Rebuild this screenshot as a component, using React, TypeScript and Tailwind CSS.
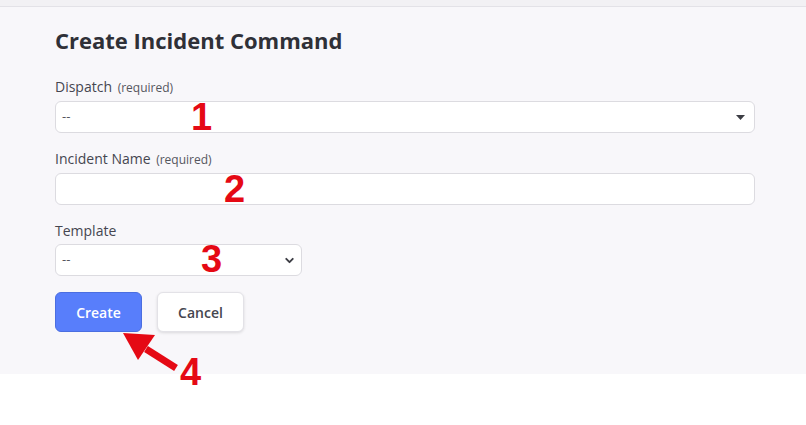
import { ChevronDown } from 'lucide-react';

function Marker({ n, className }: { n: string; className: string }) {
    return (
        <span
            className={`absolute text-[38px] leading-none font-bold text-[#e50914] ${className}`}
            style={{ fontFamily: '"Liberation Sans", Arial, sans-serif' }}
        >
            {n}
        </span>
    );
}

export default function App() {
    return (
        <div className="relative w-[806px] h-[425px] bg-white" style={{ fontFamily: '"Open Sans", "Noto Sans", sans-serif' }}>
            <div className="h-[7px] bg-[#f2f1f4] border-b border-[#e3e2e7]" />

            <main className="bg-[#f8f7fa] pl-[55px] pr-[51px] pt-[18px] pb-[42px]">
                <h1 className="text-[22px] leading-[30px] font-bold text-[#2f3037]">Create Incident Command</h1>

                <form className="mt-[22px]">
                    <label className="block text-[14px] leading-[20px] text-[#454650] mb-[3px]">
                        Dispatch <span className="ml-[2px] text-[12px] text-[#55565e]">(required)</span>
                    </label>
                    <div className="h-[32px] flex items-center justify-between bg-white border border-[#dcdbe0] rounded-[6px] pl-[6px] pr-[9px]">
                        <span className="text-[13px] text-[#55565e]">--</span>
                        <svg width="9" height="5" viewBox="0 0 9 5">
                            <path d="M0 0h9L4.5 5z" fill="#3c3d44" />
                        </svg>
                    </div>

                    <label className="block mt-[16px] text-[14px] leading-[20px] text-[#454650] mb-[3px]">
                        Incident Name <span className="ml-[2px] text-[12px] text-[#55565e]">(required)</span>
                    </label>
                    <div className="h-[32px] bg-white border border-[#dcdbe0] rounded-[6px]" />

                    <label className="block mt-[16px] text-[14px] leading-[20px] text-[#454650] mb-[3px]">Template</label>
                    <div className="w-[247px] h-[32px] flex items-center justify-between bg-white border border-[#dcdbe0] rounded-[6px] pl-[6px] pr-[5px]">
                        <span className="text-[13px] text-[#55565e]">--</span>
                        <ChevronDown size={13} strokeWidth={3.5} color="#3c3d44" />
                    </div>

                    <div className="flex gap-[15px] mt-[16px]">
                        <button type="button" className="w-[87px] h-[40px] rounded-[6px] bg-[#587efb] border border-[#4b6ee0] text-white text-[14px] font-semibold">
                            Create
                        </button>
                        <button type="button" className="w-[87px] h-[40px] rounded-[6px] bg-white border border-[#e3e2e7] shadow-[0_1px_3px_rgba(0,0,0,0.12)] text-[#45464f] text-[14px] font-semibold">
                            Cancel
                        </button>
                    </div>
                </form>
            </main>

            <Marker n="1" className="left-[191px] top-[98px]" />
            <Marker n="2" className="left-[224px] top-[170px]" />
            <Marker n="3" className="left-[201px] top-[240px]" />
            <Marker n="4" className="left-[180px] top-[353px]" />

            <svg className="absolute left-0 top-0" width="806" height="425" viewBox="0 0 806 425">
                <path d="M176 368 L146 349" stroke="#e50914" strokeWidth="7" />
                <path d="M123 333 L155 335 L138 360 Z" fill="#e50914" />
            </svg>
        </div>
    );
}
